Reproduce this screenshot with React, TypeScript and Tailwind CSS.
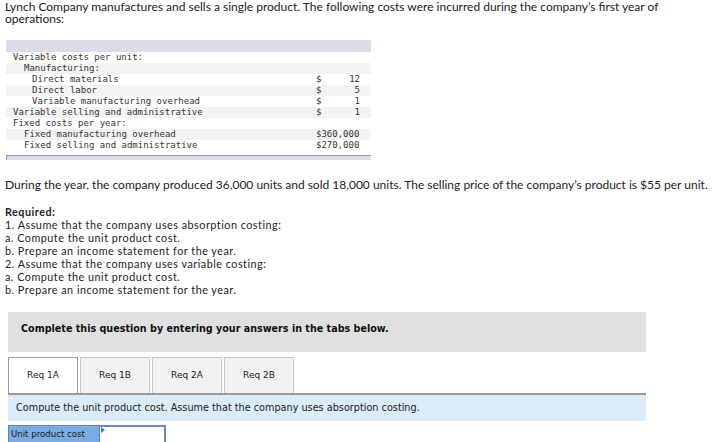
import React from "react";

const rows: { label: string; indent: number; cur?: string; val?: string; full?: string }[] = [
  { label: "Variable costs per unit:", indent: 7 },
  { label: "Manufacturing:", indent: 18 },
  { label: "Direct materials", indent: 26, cur: "$", val: "12" },
  { label: "Direct labor", indent: 26, cur: "$", val: "5" },
  { label: "Variable manufacturing overhead", indent: 26, cur: "$", val: "1" },
  { label: "Variable selling and administrative", indent: 7, cur: "$", val: "1" },
  { label: "Fixed costs per year:", indent: 7 },
  { label: "Fixed manufacturing overhead", indent: 18, full: "$360,000" },
  { label: "Fixed selling and administrative", indent: 18, full: "$270,000" },
];

const indentCls: Record<number, string> = {
  7: "pl-[7px]",
  18: "pl-[18px]",
  26: "pl-[26px]",
};

export default function App() {
  return (
    <div
      className="w-[715px] h-[442px] bg-white overflow-hidden text-[#222]"
      style={{ fontFamily: "Lato, 'Open Sans', sans-serif" }}
    >
      <p className="px-[5px] pt-[1px] text-[12px] leading-[12px] w-[680px]">
        Lynch Company manufactures and sells a single product. The following costs were incurred during the company’s first year of operations:
      </p>

      <div className="ml-[6px] w-[365px] mt-[15px]" style={{ fontFamily: "'DejaVu Sans Mono', 'Liberation Mono', monospace" }}>
        <div className="h-[12px] bg-[#dadde7]" />
        {rows.map((r, i) => (
          <div
            key={i}
            className={`h-[11px] flex items-center text-[9px] leading-[11px] text-[#333] ${i % 2 === 1 ? "bg-[#f3f3f3]" : "bg-white"}`}
          >
            <div className={`flex-1 whitespace-pre ${indentCls[r.indent]}`}>{r.label}</div>
            <div className="w-[44px] mr-[11px] flex justify-between whitespace-pre">
              {r.full ? (
                <span>{r.full}</span>
              ) : r.cur ? (
                <>
                  <span>{r.cur}</span>
                  <span>{r.val}</span>
                </>
              ) : null}
            </div>
          </div>
        ))}
        <div className="mt-[4px] h-[5px] border-t border-l border-[#9a9a9a] bg-[#dadde7]" />
      </div>

      <p className="px-[5px] mt-[18px] text-[12px] leading-[13px] whitespace-nowrap">
        During the year, the company produced 36,000 units and sold 18,000 units. The selling price of the company’s product is $55 per unit.
      </p>

      <p className="px-[5px] mt-[14px] text-[10.8px] leading-[13px] tracking-[0.5px]">
        <span className="font-bold">Required:</span>
        <br />
        1. Assume that the company uses absorption costing:
        <br />
        a. Compute the unit product cost.
        <br />
        b. Prepare an income statement for the year.
        <br />
        2. Assume that the company uses variable costing:
        <br />
        a. Compute the unit product cost.
        <br />
        b. Prepare an income statement for the year.
      </p>

      <div style={{ fontFamily: "'DejaVu Sans', Verdana, sans-serif" }}>
        <div className="ml-[8px] mt-[16px] w-[638px] h-[40px] bg-[#e0e0e0] pl-[13px] pt-[11px] text-[9.6px] leading-[12px] font-bold text-[#111]">
          Complete this question by entering your answers in the tabs below.
        </div>

        <div className="ml-[8px] mt-[5px] flex gap-[2px]">
          {["Req 1A", "Req 1B", "Req 2A", "Req 2B"].map((t, i) => (
            <div
              key={t}
              className={`w-[70px] h-[36px] flex items-center justify-center text-[9px] text-[#222] border border-b-0 ${
                i === 0 ? "bg-white border-[#9a9a9a]" : "bg-[#f1f1f1] border-[#c8c8c8]"
              }`}
            >
              {t}
            </div>
          ))}
        </div>

        <div className="ml-[8px] w-[638px] h-[28px] border-t-2 border-[#9a9a9a] bg-[#dbebf8] flex items-center pl-[8px] text-[9.7px] text-[#222]">
          Compute the unit product cost. Assume that the company uses absorption costing.
        </div>

        <div className="ml-[8px] mt-[4px] flex h-[20px]">
          <div className="w-[92px] bg-[#7aabe2] border border-[#5a86bd] pl-[2px] pt-[1px] text-[8.6px] leading-[14px] text-[#1a1a1a]">
            Unit product cost
          </div>
          <div className="relative w-[66px] bg-white border-2 border-[#6a8cbc] border-l-0">
            <div className="absolute left-[1px] top-0 w-0 h-0 border-t-[3px] border-b-[3px] border-l-[4px] border-t-transparent border-b-transparent border-l-[#3b7bd6]" />
          </div>
        </div>
      </div>
    </div>
  );
}
